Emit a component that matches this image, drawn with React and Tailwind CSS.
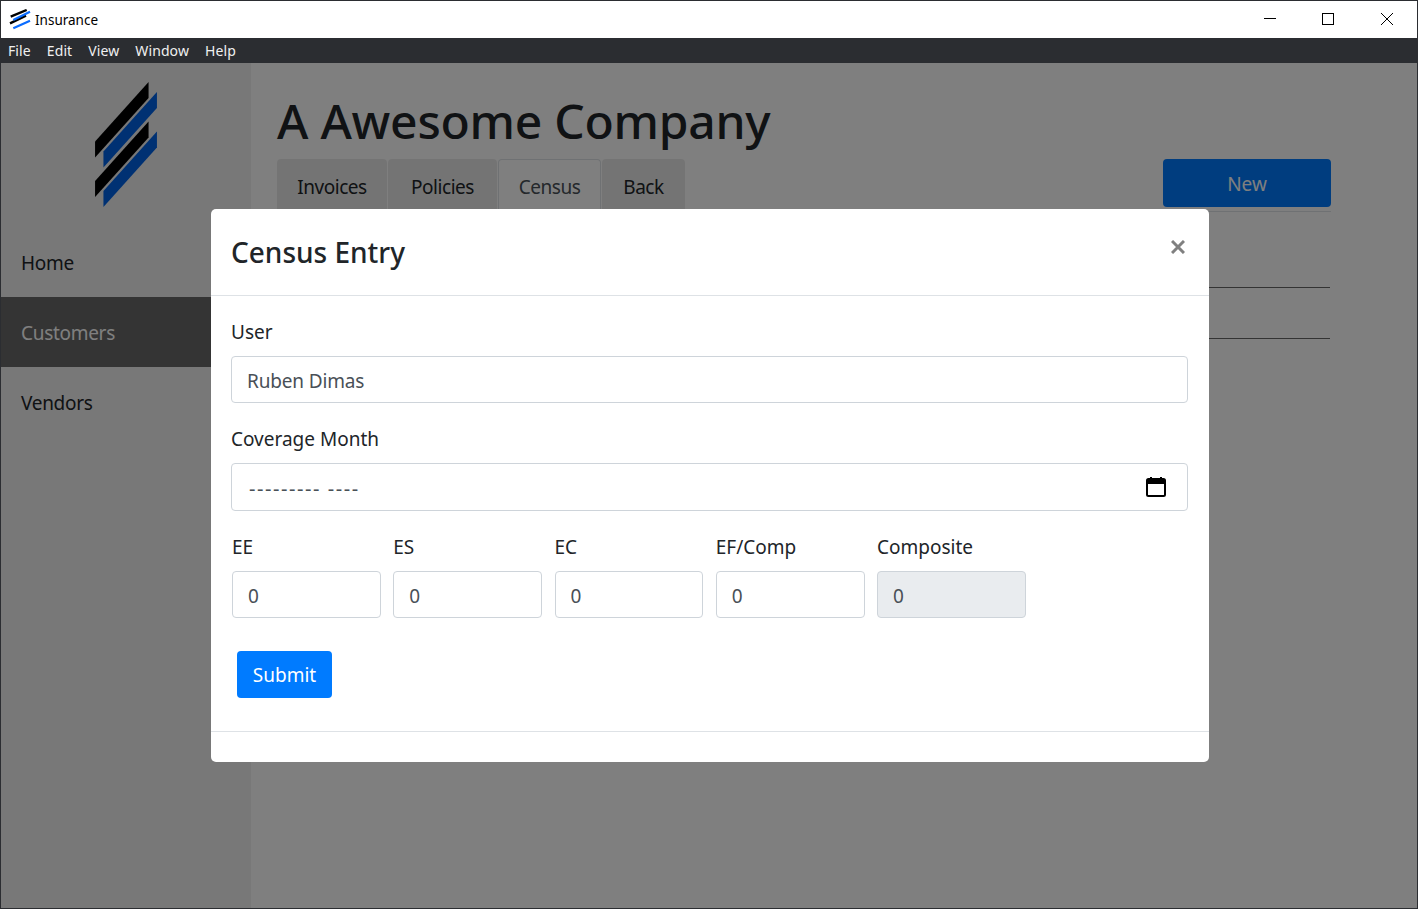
const menus = ["File", "Edit", "View", "Window", "Help"];
const counts = [
  { label: "EE", value: "0" },
  { label: "ES", value: "0" },
  { label: "EC", value: "0" },
  { label: "EF/Comp", value: "0" },
  { label: "Composite", value: "0", disabled: true },
];

function Logo({ className }) {
  return (
    <svg viewBox="75 37 185 374" className={className}>
      <polygon points="235,37 75,215 75,263 235,85" fill="#000" />
      <polygon points="260,67 100,245 100,293 260,115" fill="#0062e6" />
      <polygon points="235,155 75,333 75,381 235,203" fill="#000" />
      <polygon points="260,185 100,363 100,411 260,233" fill="#0062e6" />
    </svg>
  );
}

function TitleIcon() {
  return (
    <svg viewBox="9 9 22 22" className="h-[22px] w-[22px]">
      <path d="M10.7 16.7 L26.7 10 M10 23.3 L26 15.7" fill="none" strokeWidth="2.4" stroke="#000" />
      <path d="M13.3 20 L30 11.7 M13.3 28.3 L30 20.7" fill="none" strokeWidth="2.2" stroke="#0a6cff" />
    </svg>
  );
}

function CalendarIcon() {
  return (
    <svg viewBox="0 0 20 21" className="mb-[1px] h-[21px] w-[20px]">
      <rect x="1" y="3" width="18" height="17" rx="1.5" fill="none" stroke="#000" strokeWidth="2" />
      <rect x="1" y="3" width="18" height="5" fill="#000" />
      <rect x="4" y="1" width="2" height="3" fill="#000" />
      <rect x="14" y="1" width="2" height="3" fill="#000" />
    </svg>
  );
}

export default function App() {
  return (
    <div className="relative flex h-[909px] w-[1418px] flex-col overflow-hidden border border-[#2b2d31] font-['Noto_Sans',sans-serif] text-[#212529]">
      <div className="flex h-[37px] shrink-0 items-center bg-white pl-[8px] text-[13.5px] text-black">
        <TitleIcon />
        <span className="ml-[4px] pt-[1px]">Insurance</span>
        <div className="ml-auto flex items-center pb-[1px] pr-[24px]">
          <svg viewBox="0 0 12 12" className="mr-[46px] h-[12px] w-[12px]" shapeRendering="crispEdges"><path d="M0 5.5 H12" stroke="#000" /></svg>
          <svg viewBox="0 0 12 12" className="mr-[47px] h-[12px] w-[12px]" shapeRendering="crispEdges"><rect x="0.5" y="0.5" width="11" height="11" fill="none" stroke="#000" /></svg>
          <svg viewBox="0 0 12 12" className="h-[12px] w-[12px]"><path d="M0 0 L12 12 M12 0 L0 12" stroke="#000" /></svg>
        </div>
      </div>
      <div className="flex h-[25px] shrink-0 items-center gap-[16px] bg-[#2b2d31] pl-[7px] text-[14px] tracking-[0.1px] text-[#f0f0f0]">
        {menus.map((m) => <span key={m}>{m}</span>)}
      </div>

      <div className="flex flex-1">
        <aside className="w-[250px] shrink-0 bg-[#f0f0f0]">
          <div className="flex h-[164px] justify-center pt-[19px]">
            <Logo className="h-[125px] w-[62px]" />
          </div>
          <nav className="text-[19px] tracking-[-0.3px]">
            <div className="flex h-[70px] items-center pl-[20px] pt-[2px]">Home</div>
            <div className="flex h-[70px] items-center bg-[#686868] pl-[20px] pt-[2px] text-white">Customers</div>
            <div className="flex h-[70px] items-center pl-[20px] pt-[2px]">Vendors</div>
          </nav>
        </aside>
        <main className="flex-1 bg-white pl-[26px] pr-[86px] pt-[26px]">
          <h1 className="text-[48px] leading-[64px] font-medium tracking-[-0.25px]">A Awesome Company</h1>
          <div className="mt-[6px] flex items-end justify-between border-b border-[#dee2e6]">
            <div className="flex gap-[1px] text-[19px] tracking-[-0.45px]">
              <span className="flex h-[52px] w-[110px] items-center justify-center rounded-t bg-[#e9e9e9] pt-[5px]">Invoices</span>
              <span className="flex h-[52px] w-[109px] items-center justify-center rounded-t bg-[#e9e9e9] pt-[5px]">Policies</span>
              <span className="flex h-[52px] w-[103px] items-center justify-center rounded-t border border-[#dee2e6] border-b-white bg-white pt-[5px] text-[#495057]">Census</span>
              <span className="flex h-[52px] w-[83px] items-center justify-center rounded-t bg-[#e9e9e9] pt-[5px]">Back</span>
            </div>
            <button className="mb-[4px] h-[48px] w-[168px] rounded bg-[#007bff] pt-[3px] text-[19px] text-white">New</button>
          </div>
          <div className="mr-[1px] h-[76px] border-b border-[#666666]" />
          <div className="mr-[1px] h-[51px] border-b border-[#666666]" />
        </main>
      </div>

      <div className="absolute inset-x-0 top-[62px] bottom-0 bg-black/50">
        <div className="ml-[210px] mt-[146px] flex w-[998px] flex-col rounded-[5px] bg-white">
          <div className="flex h-[87px] items-start justify-between border-b border-[#dee2e6] pl-[20px] pr-[24px] pt-[22px]">
            <h2 className="text-[28px] leading-[42px] font-medium">Census Entry</h2>
            <svg viewBox="0 0 14 14" className="mt-[9px] h-[14px] w-[14px]"><path d="M1 1 L13 13 M13 1 L1 13" stroke="#808080" strokeWidth="3" /></svg>
          </div>
          <div className="flex flex-col pl-[20px] pr-[21px] pt-[24px] text-[19px]">
            <label className="leading-[24px]">User</label>
            <input readOnly value="Ruben Dimas" className="mt-[12px] h-[47px] rounded border border-[#ced4da] px-[15px] pt-[2px] tracking-[-0.15px] text-[#495057] outline-none" />
            <label className="mt-[24px] leading-[24px]">Coverage Month</label>
            <div className="mt-[12px] flex h-[48px] items-center justify-between rounded border border-[#ced4da] pl-[17px] pr-[21px] text-[20px] tracking-[1.55px] text-[#495057]">
              <span className="pt-[3px]">--------- ----</span>
              <CalendarIcon />
            </div>
            <div className="mt-[24px] ml-[1px] flex gap-[12px]">
              {counts.map((c) => (
                <div key={c.label} className="flex w-[149.25px] flex-col">
                  <label className="leading-[24px]">{c.label}</label>
                  <input readOnly value={c.value} className={`mt-[12px] h-[47px] w-[148.75px] rounded border border-[#ced4da] px-[15px] pt-[2px] text-[#495057] outline-none ${c.disabled ? "bg-[#e9ecef]" : "bg-white"}`} />
                </div>
              ))}
            </div>
            <button className="mt-[33px] ml-[6px] h-[47px] w-[95px] rounded bg-[#007bff] pt-[2px] text-white">Submit</button>
          </div>
          <div className="mt-[33px] h-[31px] border-t border-[#dee2e6]" />
        </div>
      </div>
    </div>
  );
}
